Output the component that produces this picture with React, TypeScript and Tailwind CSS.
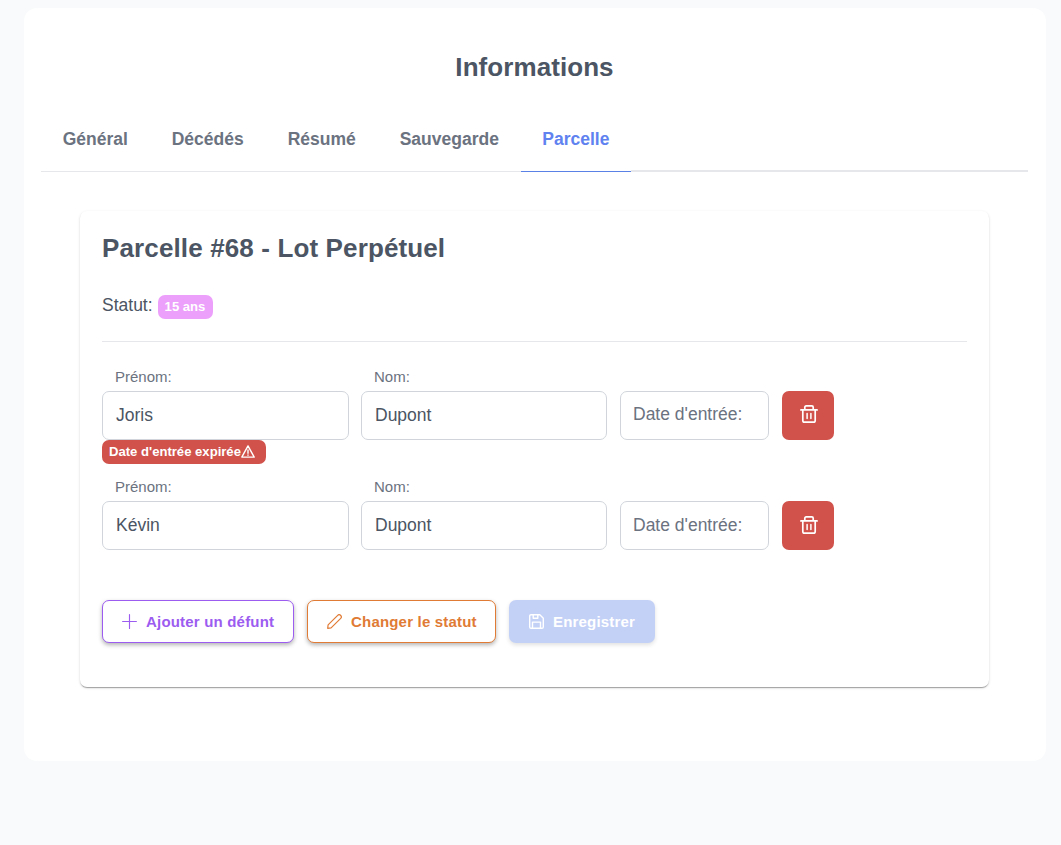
import React from "react";

type IconProps = { className?: string };

const Trash = ({ className }: IconProps) => (
  <svg className={className} viewBox="0 0 18 18" fill="none" stroke="currentColor" strokeWidth="1.7" strokeLinecap="round" strokeLinejoin="round">
    <path d="M.9 4.9h16.2M4.8 4.7V2.2A1.3 1.3 0 0 1 6.1.9h5.8a1.3 1.3 0 0 1 1.3 1.3v2.5M2.8 5v10.4a1.7 1.7 0 0 0 1.7 1.7h9a1.7 1.7 0 0 0 1.7-1.7V5" />
    <path d="M7.1 8.6v5M10.9 8.6v5" strokeWidth="1.5" />
  </svg>
);

const Plus = ({ className }: IconProps) => (
  <svg className={className} viewBox="0 0 15 15" fill="none" stroke="currentColor" strokeWidth="1.15" strokeLinecap="round">
    <path d="M7.5.6v13.8M.6 7.5h13.8" />
  </svg>
);

const Pencil = ({ className }: IconProps) => (
  <svg className={className} viewBox="0 0 15 15" fill="none" stroke="currentColor" strokeWidth="1.2" strokeLinecap="round" strokeLinejoin="round">
    <path d="M.7 14.3l.4-3.4L10.7 1.3a2 2 0 0 1 2.8 0l.2.2a2 2 0 0 1 0 2.8L4.1 13.9z" />
  </svg>
);

const Save = ({ className }: IconProps) => (
  <svg className={className} viewBox="0 0 15 15" fill="none" stroke="currentColor" strokeWidth="1.4" strokeLinecap="round" strokeLinejoin="round">
    <path d="M2 .7h8.8l3.5 3.5V13a1.3 1.3 0 0 1-1.3 1.3H2A1.3 1.3 0 0 1 .7 13V2A1.3 1.3 0 0 1 2 .7zM3.5 14V8.1h8V14M4.2.9v3.3h4.6V.9" />
  </svg>
);

const Warning = ({ className }: IconProps) => (
  <svg className={className} viewBox="0 0 14 13" fill="none" stroke="currentColor" strokeWidth="1.4" strokeLinecap="round" strokeLinejoin="round">
    <path d="M7 .9L13.2 12.1H.8zM7 5v3.2M7 10v.3" />
  </svg>
);

const tabs = [
  { label: "Général", width: "w-[109px]" },
  { label: "Décédés", width: "w-[116px]" },
  { label: "Résumé", width: "w-[112px]" },
  { label: "Sauvegarde", width: "w-[143px]" },
];

const Field = ({ label, value, width }: { label: string; value: string; width: string }) => (
  <label className={`flex flex-col ${width}`}>
    <span className="ml-[13px] h-[23px] text-[15px] leading-[18px] text-[#6b7280]">{label}</span>
    <span className="flex h-[49px] items-center rounded-[7px] border border-[#d1d5db] pl-[13px] pb-[1px] text-[17.5px] text-[#4b5563]">
      {value}
    </span>
  </label>
);

const Person = ({ first, last, dateOffset, iconOffset }: { first: string; last: string; dateOffset: string; iconOffset: string }) => (
  <div className="flex h-[72px] items-end">
    <Field label="Prénom:" value={first} width="w-[247px] mr-3" />
    <Field label="Nom:" value={last} width="w-[246px] mr-[13px]" />
    <div className={`mr-[13px] flex h-[49px] w-[149px] items-center rounded-[7px] border border-[#d1d5db] pl-3 text-[17.5px] text-[#6b7280] ${dateOffset}`}>
      Date d'entrée:
    </div>
    <button aria-label="Supprimer" className={`flex h-[49px] w-[52px] items-center justify-center rounded-[7px] bg-[#d0524b] text-white ${iconOffset}`}>
      <Trash className="ml-px size-[18px]" />
    </button>
  </div>
);

export default function App() {
  return (
    <div className="flex h-[845px] flex-col bg-[#f8fafc] pt-2 pl-6 font-['Liberation_Sans',Arial,sans-serif] text-[#4b5563]">
      <main className="flex h-[753px] w-[1022px] flex-col rounded-[13px] bg-white pl-[17px]">
        <h1 className="mt-[43px] w-[987px] text-center text-[26px] leading-8 font-bold tracking-[0.07px]">Informations</h1>
        <nav className="mt-[25px] flex h-[64px] w-[987px] text-[17.5px] font-bold leading-[62px] text-[#6b7280]">
          {tabs.map((t) => (
            <div key={t.label} className={`${t.width} border-b border-[#e5e7eb] pl-[21.7px]`}>
              {t.label}
            </div>
          ))}
          <div className="w-[110px] border-b border-[#5a82e6] pl-[21.3px] text-[#6082f0]">Parcelle</div>
          <div className="flex-1 border-b-2 border-[#e5e7eb]" />
        </nav>

        <section className="mt-[39px] ml-[39px] flex h-[476px] w-[909px] flex-col rounded-[7px] bg-white px-[22px] shadow-[0_2px_1px_-1px_rgba(0,0,0,0.2),0_1px_1px_0_rgba(0,0,0,0.14),0_1px_3px_0_rgba(0,0,0,0.12)]">
          <h2 className="mt-[21px] text-[26px] leading-8 font-bold tracking-[0.13px]">Parcelle #68 - Lot Perpétuel</h2>
          <div className="mt-[31px] flex h-6 items-center text-[17.5px]">
            <span className="w-14 pb-1">Statut:</span>
            <span className="flex h-6 w-[55px] items-center justify-center rounded-[7px] bg-[#ec9ffb] pr-px text-[13.1px] font-bold text-white">15 ans</span>
          </div>
          <div className="mt-[22px] h-px w-[865px] bg-[#e5e7eb]" />

          <div className="mt-[26px]">
            <Person first="Joris" last="Dupont" dateOffset="pb-[2px]" iconOffset="pb-[3px]" />
            <span className="flex h-6 w-[164px] items-center rounded-[7px] bg-[#d0524b] pl-[7px] text-[13.1px] font-bold text-white">
              <span className="whitespace-nowrap">Date d'entrée expirée</span>
              <Warning className="mb-px h-[13px] w-[14px] shrink-0" />
            </span>
          </div>
          <div className="mt-[14px]">
            <Person first="Kévin" last="Dupont" dateOffset="pb-0" iconOffset="pb-px" />
          </div>

          <div className="mt-[50px] flex gap-[13px] text-[15px] font-bold tracking-[0.19px]">
            <button className="flex h-[43px] w-[192px] items-center rounded-[7px] border border-[#9c5cf0] bg-white pl-[19px] text-[#9c5cf0] shadow-[0_2px_4px_rgba(0,0,0,0.3)]">
              <Plus className="mr-[9px] size-[15px]" />
              <span className="pt-[2px]">Ajouter un défunt</span>
            </button>
            <button className="flex h-[43px] w-[189px] items-center rounded-[7px] border border-[#e07b35] bg-white pl-[19px] text-[#e07b35] shadow-[0_2px_4px_rgba(0,0,0,0.3)]">
              <Pencil className="mr-[9px] size-[15px]" />
              <span className="pt-[2px]">Changer le statut</span>
            </button>
            <button className="flex h-[43px] w-[146px] items-center rounded-[7px] bg-[#c4d1f7] pl-5 text-white shadow-[0_2px_4px_rgba(0,0,0,0.12)]">
              <Save className="mr-[9px] size-[15px]" />
              <span className="pt-[2px]">Enregistrer</span>
            </button>
          </div>
        </section>
      </main>
    </div>
  );
}
